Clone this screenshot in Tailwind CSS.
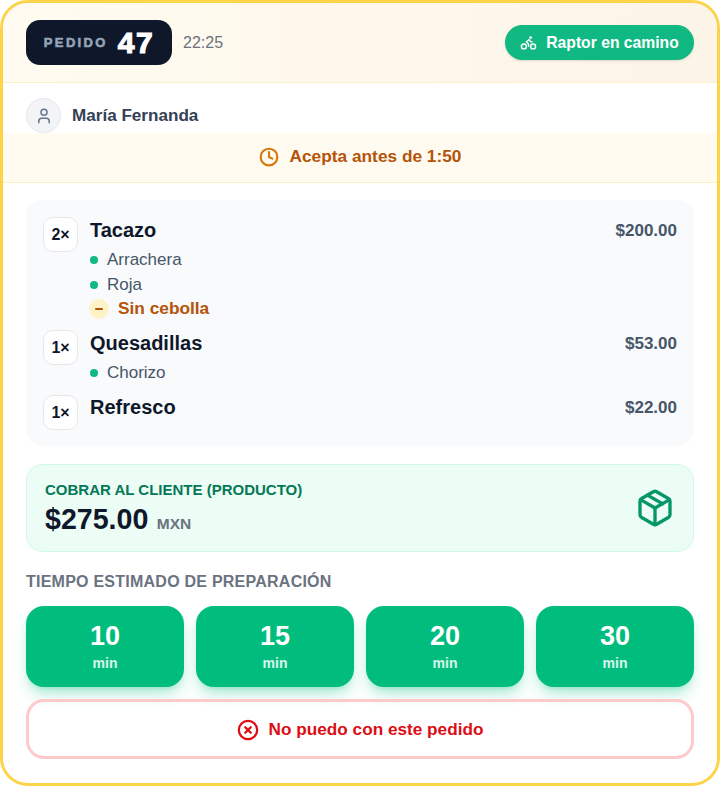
<!DOCTYPE html>
<html lang="es">
<head>
    <meta charset="UTF-8">
    <meta name="viewport" content="width=device-width, initial-scale=1.0">
    <title>Pedido 47</title>
    <script src="https://cdn.jsdelivr.net/npm/@tailwindcss/browser@4"></script>
</head>
<body class="bg-white font-['Liberation_Sans',Arial,sans-serif]">
    <div class="w-[720px] h-[786px] bg-white border-[3px] border-[#fdd34a] rounded-[28px] overflow-hidden flex flex-col">
        <!-- Header -->
        <div class="h-[80px] shrink-0 flex items-center justify-between pl-[23px] pr-[23px] bg-gradient-to-r from-[#fffbf0] to-[#fdf4e8] border-b border-[#fdf0c4]">
            <div class="flex items-center gap-[11px]">
                <div class="h-[45px] w-[146px] flex items-center justify-center gap-[10px] bg-[#0f172a] rounded-[14px]">
                    <span class="text-[13px] font-bold tracking-[0.18em] text-[#94a3b8] [-webkit-text-stroke:0.6px_#94a3b8]">PEDIDO</span>
                    <span class="text-[30px] leading-none font-black tracking-[1.5px] text-white [-webkit-text-stroke:1.2px_white]">47</span>
                </div>
                <span class="text-base text-[#6b7280]">22:25</span>
            </div>
            <div class="h-[35px] w-[189px] flex items-center justify-center gap-[9px] bg-[#10b981] rounded-full shadow-sm text-white">
                <svg class="w-[17px] h-[17px]" fill="none" stroke="currentColor" stroke-width="2" stroke-linecap="round" stroke-linejoin="round" viewBox="0 0 24 24">
                    <circle cx="18.5" cy="17.5" r="3.5"></circle>
                    <circle cx="5.5" cy="17.5" r="3.5"></circle>
                    <circle cx="15" cy="5" r="1"></circle>
                    <path d="M12 17.5V14l-3-3 4-3 2 3h2"></path>
                </svg>
                <span class="text-[15.7px] font-bold">Raptor en camino</span>
            </div>
        </div>

        <!-- Customer -->
        <div class="h-[50px] shrink-0 flex items-center gap-[11px] pl-[23px] pt-[15px]">
            <div class="w-[35px] h-[35px] flex items-center justify-center rounded-full bg-[#f3f4f6] border border-[#e5e7eb] text-[#64748b]">
                <svg class="w-[18px] h-[18px]" fill="none" stroke="currentColor" stroke-width="2" stroke-linecap="round" stroke-linejoin="round" viewBox="0 0 24 24">
                    <path d="M19 21v-2a4 4 0 0 0-4-4H9a4 4 0 0 0-4 4v2"></path>
                    <circle cx="12" cy="7" r="4"></circle>
                </svg>
            </div>
            <span class="text-[17.1px] font-bold text-[#334155]">María Fernanda</span>
        </div>

        <!-- Accept countdown -->
        <div class="h-[50px] shrink-0 flex items-center justify-center gap-[11px] pb-[2px] bg-[#fffbf0] border-b border-[#fdf0c4]">
            <svg class="w-5 h-5 text-[#d97706]" fill="none" stroke="currentColor" stroke-width="2.5" stroke-linecap="round" stroke-linejoin="round" viewBox="0 0 24 24">
                <circle cx="12" cy="12" r="10"></circle>
                <path d="M12 6v6l4 2"></path>
            </svg>
            <span class="text-[17.3px] font-bold text-[#b45309]">Acepta antes de 1:50</span>
        </div>

        <div class="flex-1 flex flex-col px-[23px] pt-[17px]">
            <!-- Items -->
            <div class="h-[246px] shrink-0 flex flex-col gap-[11px] bg-[#f8fafc] rounded-2xl pl-[17px] pr-[17px] pt-[17px]">
                <div class="flex gap-3">
                    <div class="w-[35px] h-[35px] shrink-0 flex items-center justify-center bg-white border border-[#e5e7eb] rounded-[10px] text-base font-bold text-[#0f172a]">2×</div>
                    <div class="flex-1">
                        <div class="flex justify-between">
                            <span class="h-[26px] text-xl leading-[26px] font-bold text-[#0f172a]">Tacazo</span>
                            <span class="mt-px h-[25px] leading-[26px] text-[17px] font-bold text-[#475569]">$200.00</span>
                        </div>
                        <div class="mt-[5px] flex flex-col gap-px">
                            <div class="h-6 flex items-center gap-[9px] text-[17px] text-[#475569]"><span class="w-2 h-2 rounded-full bg-[#10b981]"></span>Arrachera</div>
                            <div class="h-6 flex items-center gap-[9px] text-[17px] text-[#475569]"><span class="w-2 h-2 rounded-full bg-[#10b981]"></span>Roja</div>
                            <div class="mt-px h-5 flex items-center gap-[9px] text-[17.3px] font-bold text-[#b45309]">
                                <span class="-ml-px w-5 h-5 flex items-center justify-center rounded-full bg-[#fef3c7]"><span class="w-2 h-0.5 bg-[#b45309] rounded-full"></span></span>Sin cebolla
                            </div>
                        </div>
                    </div>
                </div>
                <div class="flex gap-3">
                    <div class="w-[35px] h-[35px] shrink-0 flex items-center justify-center bg-white border border-[#e5e7eb] rounded-[10px] text-base font-bold text-[#0f172a]">1×</div>
                    <div class="flex-1">
                        <div class="flex justify-between">
                            <span class="h-[26px] text-xl leading-[26px] font-bold text-[#0f172a]">Quesadillas</span>
                            <span class="mt-px h-[25px] leading-[26px] text-[17px] font-bold text-[#475569]">$53.00</span>
                        </div>
                        <div class="mt-[5px] h-6 flex items-center gap-[9px] text-[17px] text-[#475569]"><span class="w-2 h-2 rounded-full bg-[#10b981]"></span>Chorizo</div>
                    </div>
                </div>
                <div class="flex gap-3 -mt-px">
                    <div class="w-[35px] h-[35px] shrink-0 flex items-center justify-center bg-white border border-[#e5e7eb] rounded-[10px] text-base font-bold text-[#0f172a]">1×</div>
                    <div class="flex-1 flex justify-between">
                        <span class="h-6 text-xl leading-6 font-bold text-[#0f172a]">Refresco</span>
                        <span class="mt-px h-6 leading-6 text-[17px] font-bold text-[#475569]">$22.00</span>
                    </div>
                </div>
            </div>

            <!-- Total -->
            <div class="mt-[18px] h-[88px] shrink-0 flex items-center justify-between pl-[18px] pr-[18px] pt-[3px] bg-[#ecfdf5] border border-[#d1fae5] rounded-2xl">
                <div>
                    <div class="text-[15px] leading-5 font-bold text-[#047857]">COBRAR AL CLIENTE (PRODUCTO)</div>
                    <div class="mt-[3px] leading-8">
                        <span class="text-[28.6px] font-bold text-[#0f172a]">$275.00</span>
                        <span class="ml-1 text-[15.5px] font-bold text-[#6b7280]">MXN</span>
                    </div>
                </div>
                <svg class="w-10 h-10 -mt-[3px] text-[#059669]" fill="none" stroke="currentColor" stroke-width="2" stroke-linecap="round" stroke-linejoin="round" viewBox="0 0 24 24">
                    <path d="M11 21.73a2 2 0 0 0 2 0l7-4A2 2 0 0 0 21 16V8a2 2 0 0 0-1-1.73l-7-4a2 2 0 0 0-2 0l-7 4A2 2 0 0 0 3 8v8a2 2 0 0 0 1 1.73z"></path>
                    <path d="M12 22V12"></path>
                    <path d="m3.3 7 8.7 5 8.7-5"></path>
                    <path d="m7.5 4.27 9 5.15"></path>
                </svg>
            </div>

            <div class="mt-5 h-5 leading-5 text-base font-bold tracking-[0.24px] text-[#6b7280]">TIEMPO ESTIMADO DE PREPARACIÓN</div>

            <!-- Prep time -->
            <div class="mt-[14px] grid grid-cols-4 gap-3">
                <div class="h-[81px] flex flex-col items-center justify-center bg-[#00bd7e] rounded-[18px] shadow-lg shadow-emerald-500/30 text-white">
                    <span class="text-[27px] leading-8 font-bold">10</span><span class="mt-px text-sm leading-5 font-bold text-white/85">min</span>
                </div>
                <div class="h-[81px] flex flex-col items-center justify-center bg-[#00bd7e] rounded-[18px] shadow-lg shadow-emerald-500/30 text-white">
                    <span class="text-[27px] leading-8 font-bold">15</span><span class="mt-px text-sm leading-5 font-bold text-white/85">min</span>
                </div>
                <div class="h-[81px] flex flex-col items-center justify-center bg-[#00bd7e] rounded-[18px] shadow-lg shadow-emerald-500/30 text-white">
                    <span class="text-[27px] leading-8 font-bold">20</span><span class="mt-px text-sm leading-5 font-bold text-white/85">min</span>
                </div>
                <div class="h-[81px] flex flex-col items-center justify-center bg-[#00bd7e] rounded-[18px] shadow-lg shadow-emerald-500/30 text-white">
                    <span class="text-[27px] leading-8 font-bold">30</span><span class="mt-px text-sm leading-5 font-bold text-white/85">min</span>
                </div>
            </div>

            <!-- Reject -->
            <div class="mt-3 h-[60px] pt-px flex items-center justify-center gap-[10px] border-[3px] border-[#fecaca] rounded-[18px] text-[#dc0d14]">
                <svg class="w-[22px] h-[22px]" fill="none" stroke="currentColor" stroke-width="2.5" stroke-linecap="round" stroke-linejoin="round" viewBox="0 0 24 24">
                    <circle cx="12" cy="12" r="10"></circle>
                    <path d="m15 9-6 6"></path>
                    <path d="m9 9 6 6"></path>
                </svg>
                <span class="text-[17.2px] font-bold">No puedo con este pedido</span>
            </div>
        </div>
    </div>
</body>
</html>
